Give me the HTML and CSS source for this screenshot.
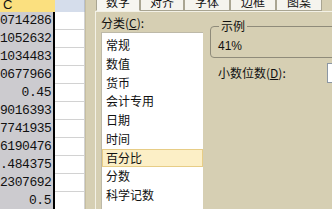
FILE: index.html
```html
<!DOCTYPE html>
<html lang="zh-CN">
<head>
<meta charset="utf-8">
<title>设置单元格格式</title>
<link rel="stylesheet" href="styles.css">
</head>
<body>
<div class="screen">
  <div class="sheet">
    <div class="hrow"><div class="hc">C</div><div class="hd"></div></div>
    <div class="row"><div class="c">0714286</div><div class="d"></div></div>
    <div class="row"><div class="c">1052632</div><div class="d"></div></div>
    <div class="row"><div class="c">1034483</div><div class="d"></div></div>
    <div class="row"><div class="c">0677966</div><div class="d"></div></div>
    <div class="row"><div class="c">0.45</div><div class="d"></div></div>
    <div class="row"><div class="c">9016393</div><div class="d"></div></div>
    <div class="row"><div class="c">7741935</div><div class="d"></div></div>
    <div class="row"><div class="c">6190476</div><div class="d"></div></div>
    <div class="row"><div class="c">.484375</div><div class="d"></div></div>
    <div class="row"><div class="c">2307692</div><div class="d"></div></div>
    <div class="row"><div class="c">0.5</div><div class="d"></div></div>
  </div>
  <div class="dialog">
    <div class="tabs">
      <div class="tab tab-active">数字</div>
      <div class="tab">对齐</div>
      <div class="tab tab-wide">字体</div>
      <div class="tab tab-wide">边框</div>
      <div class="tab tab-wide">图案</div>
    </div>
    <div class="panel">
      <div class="left">
        <div class="label">分类(<u>C</u>):</div>
        <div class="list">
          <div class="item">常规</div>
          <div class="item">数值</div>
          <div class="item">货币</div>
          <div class="item">会计专用</div>
          <div class="item">日期</div>
          <div class="item">时间</div>
          <div class="item item-sel">百分比</div>
          <div class="item">分数</div>
          <div class="item">科学记数</div>
        </div>
      </div>
      <div class="right">
        <fieldset class="group">
          <legend class="legend">示例</legend>
          <div class="sample">41%</div>
        </fieldset>
        <div class="field">
          <div class="flabel">小数位数(<u>D</u>):</div>
          <div class="input"></div>
        </div>
      </div>
    </div>
  </div>
</div>
</body>
</html>
```
FILE: styles.css
```css
html, body {
  margin: 0;
  padding: 0;
}
body {
  width: 332px;
  height: 209px;
  overflow: hidden;
  font-family: "Noto Sans CJK SC", "Liberation Sans", sans-serif;
  font-size: 12px;
  color: #111;
}
.screen {
  display: flex;
  width: 332px;
  height: 209px;
  overflow: hidden;
}
.sheet {
  width: 85px;
  flex: none;
  display: flex;
  flex-direction: column;
  background: #fff;
}
.hrow {
  display: flex;
  height: 12px;
  flex: none;
}
.hc {
  width: 55px;
  background: #fbe07f;
  font-family: "Liberation Sans", sans-serif;
  font-size: 13px;
  line-height: 10px;
  padding-left: 3px;
  box-sizing: border-box;
  overflow: hidden;
}
.hd {
  flex: 1;
  background: #d5ddeb;
  border-right: 1px solid #b9c0cc;
}
.row {
  display: flex;
  height: 18px;
  flex: none;
}
.c {
  width: 55px;
  box-sizing: border-box;
  background: #cccbcf;
  border-right: 2px solid #000;
  text-align: right;
  padding-right: 2px;
  font-family: "Liberation Mono", monospace;
  font-size: 13px;
  letter-spacing: -0.45px;
  line-height: 18px;
  overflow: hidden;
  white-space: nowrap;
}
.d {
  flex: 1;
  background: #fff;
  border-bottom: 1px solid #d2d2d2;
  border-right: 1px solid #d2d2d2;
}
.dialog {
  flex: 1;
  min-width: 0;
  background: #d6cfb3;
  display: flex;
  flex-direction: column;
  padding-left: 9px;
  border-left: 1px solid #c6bea0;
}
.tabs {
  display: flex;
  height: 11px;
  flex: none;
  padding-left: 1px;
}
.tab {
  width: 44px;
  height: 11px;
  flex: none;
  box-sizing: border-box;
  background: #f5f4ee;
  border-left: 1px solid #a9a592;
  border-right: 1px solid #a9a592;
  border-bottom: 1px solid #a9a592;
  text-align: center;
  line-height: 4px;
  font-size: 12px;
}
.tab-active {
  background: #f7f6f0;
  border-bottom-color: #f7f6f0;
}
.tab-wide {
  width: 46px;
}
.panel {
  flex: 1;
  display: flex;
  min-width: 0;
  border-top: 1px solid #f3f1e6;
  border-left: 1px solid #f3f1e6;
}
.left {
  width: 107px;
  flex: none;
  box-sizing: border-box;
  padding-left: 5px;
  display: flex;
  flex-direction: column;
}
.label {
  margin-top: 3px;
  line-height: 15px;
  height: 15px;
}
.list {
  margin-top: 2px;
  flex: 1;
  background: #fff;
  border-left: 1px solid #bdb9a8;
  border-top: 1px solid #bdb9a8;
  padding-top: 3px;
  width: 102px;
  box-sizing: border-box;
}
.item {
  height: 18.75px;
  line-height: 18.75px;
  padding-left: 4px;
  box-sizing: border-box;
  white-space: nowrap;
}
.item-sel {
  background: #fcefc6;
  border: 1px solid #e7cd86;
  line-height: 16.75px;
  padding-left: 3px;
}
.right {
  flex: 1;
  margin-left: 7px;
  display: flex;
  flex-direction: column;
  min-width: 0;
}
.group {
  margin: 7px -20px 0 0;
  padding: 0 0 4px 7px;
  border: 1px solid #8f8b7a;
  border-radius: 4px;
  min-width: 0;
}
.legend {
  padding: 0 2px;
  margin-left: 1px;
  line-height: 14px;
  font-size: 12px;
}
.sample {
  margin-top: 6px;
  line-height: 14px;
  font-family: "Liberation Sans", sans-serif;
  font-size: 12px;
}
.field {
  display: flex;
  align-items: center;
  margin-top: 5px;
  margin-left: 8px;
  height: 20px;
}
.flabel {
  width: 109px;
  flex: none;
  line-height: 14px;
  white-space: nowrap;
}
.input {
  width: 30px;
  height: 20px;
  flex: none;
  box-sizing: border-box;
  background: #fff;
  border: 1px solid #8c97a3;
}
```
